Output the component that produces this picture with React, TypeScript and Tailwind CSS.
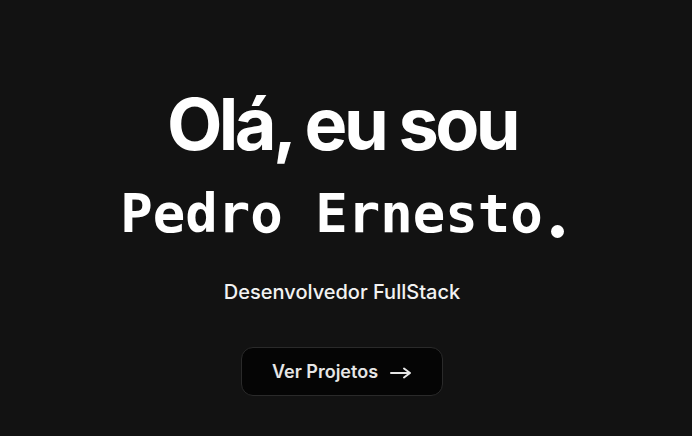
export default function App() {
  return (
    <div className="min-h-screen w-full bg-[#121212] text-white flex flex-col items-center pt-[88px] pr-2">
      <h1 className="font-['Inter',sans-serif] text-[72px] leading-none font-bold tracking-[-0.05em]">
        Olá, eu sou
      </h1>
      <h2 className="mt-[27px] font-['DejaVu_Sans_Mono',monospace] text-[54px] leading-none font-bold">
        Pedro Ernesto
        <span className="ml-2 inline-block h-[13px] w-[13px] rounded-full bg-white align-[-6px]" />
      </h2>
      <p className="mt-[37px] font-['Inter',sans-serif] text-xl font-medium text-[#f2f2f2]">
        Desenvolvedor FullStack
      </p>
      <button className="mt-[41px] h-[49px] w-[202px] flex items-center justify-center gap-3 rounded-xl border border-[#2a2a2a] bg-[#050505] font-['Inter',sans-serif] text-[18px] font-semibold text-[#e6e6e6]">
        <span>Ver Projetos</span>
        <svg width="22" height="12" viewBox="0 0 22 12" fill="none" stroke="currentColor" strokeWidth="2" strokeLinecap="round" strokeLinejoin="round" className="mt-[2px]">
          <path d="M1 6h19M14 1.5L20 6l-6 4.5" />
        </svg>
      </button>
    </div>
  );
}
